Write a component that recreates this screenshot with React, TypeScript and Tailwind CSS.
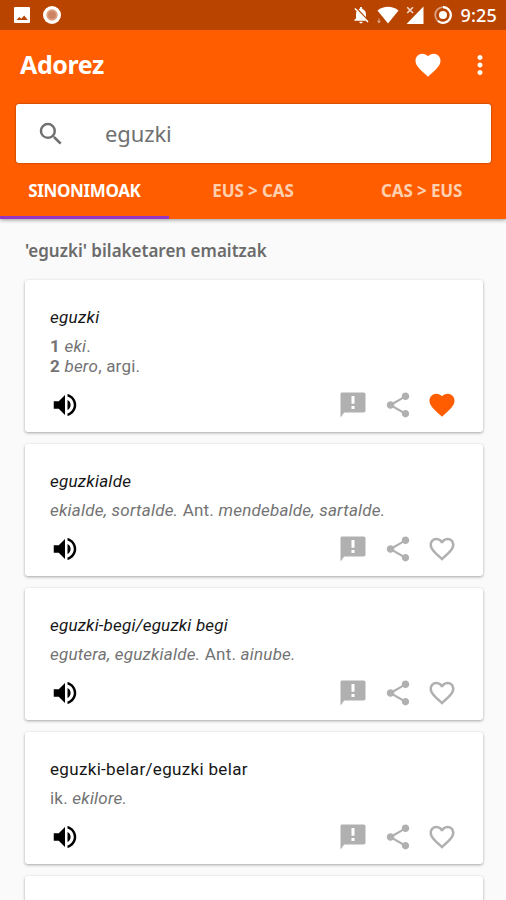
import React from 'react';
import {
  MdFavorite, MdFavoriteBorder, MdMoreVert, MdNotificationsOff,
  MdSearch, MdShare, MdVolumeUp,
} from 'react-icons/md';

const entries = [
  {
    title: <span className="tracking-[0.3px] italic">eguzki</span>,
    lines: [
      <><b className="font-bold">1</b> <i>eki</i>.</>,
      <><b className="font-bold">2</b> <i>bero</i>, argi.</>,
    ],
    favorite: true,
  },
  {
    title: <span className="tracking-[0.25px] italic">eguzkialde</span>,
    lines: [<><i>ekialde, sortalde.</i> Ant. <i>mendebalde, sartalde.</i></>],
    favorite: false,
  },
  {
    title: <span className="tracking-[0.2px] italic">eguzki-begi/eguzki begi</span>,
    lines: [<><i>egutera, eguzkialde.</i> Ant. <i>ainube.</i></>],
    favorite: false,
  },
  {
    title: <span className="tracking-[0.33px]">eguzki-belar/eguzki belar</span>,
    lines: [<>ik. <i>ekilore.</i></>],
    favorite: false,
  },
];

const FeedbackIcon: React.FC<{ className?: string }> = ({ className }) => (
  <svg className={className} viewBox="0 0 24 24" fill="currentColor">
    <path d="M20.6 2H3.2C2.4 2 2 2.5 2 3.3V22L5 18H20.6C21.4 18 22 17.4 22 16.6V3.4C22 2.6 21.4 2 20.6 2Z" />
    <path d="M10.8 4.8H13.2V11H10.8Z M10.8 12.8H13.2V15.2H10.8Z" fill="#fff" />
  </svg>
);

const StatusBar: React.FC = () => (
  <div className="flex h-[30px] items-center bg-[#b84400] pr-[9px] pl-[14px] text-white">
    <svg className="h-4 w-4" viewBox="0 0 16 16">
      <rect width="16" height="16" rx="1" fill="currentColor" />
      <path d="M2.5 13 L5.4 10 L7.3 11.7 L10.2 8.4 L13.8 13 Z" fill="#b84400" />
    </svg>
    <svg className="ml-[13px] h-[18px] w-[18px]" viewBox="0 0 18 18">
      <circle cx="9" cy="9" r="9" fill="currentColor" />
      <circle cx="9" cy="9" r="5.7" fill="#dba184" />
      <circle cx="9" cy="9" r="3.8" fill="#cd8261" />
    </svg>
    <MdNotificationsOff className="ml-auto h-5 w-5" />
    <svg className="ml-[6px] h-[18px] w-[22px]" viewBox="0 0 22 18">
      <path d="M0.5 4.6 C6.5 -0.4 15.5 -0.4 21.5 4.6 L11 17.6 Z" fill="currentColor" />
      <path d="M2 16.6 V12.6 M0.6 14.8 L2 16.6 L3.4 14.8" fill="none" stroke="#dba184" strokeWidth="1.1" />
    </svg>
    <svg className="ml-[7px] h-[18px] w-[18px]" viewBox="0 0 18 18">
      <path d="M17.5 0.5 V18 H0.5 Z" fill="currentColor" />
      <path d="M1.2 1.2 L7 7 M7 1.2 L1.2 7" stroke="#f3d9cc" strokeWidth="1.6" />
    </svg>
    <svg className="ml-[10px] h-[18px] w-[18px]" viewBox="0 0 18 18">
      <circle cx="9" cy="9" r="7.8" fill="none" stroke="#dba184" strokeWidth="1.8" />
      <path d="M9 1.2 A7.8 7.8 0 1 1 4 15" fill="none" stroke="currentColor" strokeWidth="2.2" />
      <circle cx="9" cy="9" r="4" fill="currentColor" />
    </svg>
    <span className="ml-[8px] text-[18px] leading-none font-medium tracking-[0.2px]">9:25</span>
  </div>
);

const App: React.FC = () => {
  return (
    <div className="h-[900px] w-full overflow-hidden bg-[#fafafa] font-['Noto_Sans',sans-serif]">
      <header className="relative h-[219px] bg-[#ff5d00] shadow-[0_1px_4px_rgba(0,0,0,0.4)]">
        <StatusBar />
        <div className="flex h-[74px] items-center pr-[11px] pb-[5px] pl-5 text-white">
          <h1 className="text-[25px] leading-none font-bold tracking-[-0.4px]">Adorez</h1>
          <MdFavorite className="ml-auto h-[30px] w-[30px]" />
          <MdMoreVert className="ml-[22px] h-[30px] w-[30px]" />
        </div>

        {/* Search field */}
        <div className="mr-[15px] ml-4 flex h-[59px] items-center rounded-[3px] bg-white pl-[20px] text-[#707070] shadow-[0_0_2px_rgba(0,0,0,0.5)]">
          <MdSearch className="h-[30px] w-[30px]" />
          <span className="ml-[39px] pb-[2px] text-[22px] leading-none tracking-[-0.1px]">eguzki</span>
        </div>

        {/* Tabs */}
        <nav className="grid h-[56px] grid-cols-3 text-center text-[17px] leading-[55px] font-bold text-[#ffd0b0]">
          <span className="h-[56px] border-b-[3px] border-[#9436c4] tracking-[-0.35px] text-white">SINONIMOAK</span>
          <span className="tracking-[-0.1px]">EUS &gt; CAS</span>
          <span className="tracking-[-0.1px]">CAS &gt; EUS</span>
        </nav>
      </header>

      <main className="pr-[23px] pl-[25px]">
        <h2 className="flex h-[61px] items-center pt-px text-[17px] leading-none font-semibold text-[#6b6b6b]">
          'eguzki' bilaketaren emaitzak
        </h2>

        <div className="space-y-3">
          {entries.map((entry, i) => (
            <article key={i} className="rounded-[3px] bg-white pt-[25px] pr-[26px] pb-3 pl-[25px] shadow-[0_1px_3px_rgba(0,0,0,0.35)]">
              <h3 className="h-[24px] font-[Roboto] text-[17px] leading-[24px] text-[#161616]">{entry.title}</h3>
              <div className="mt-[7px] font-[Roboto] text-[17px] leading-[20px] tracking-[0.22px] text-[#737373]">
                {entry.lines.map((line, j) => (
                  <p key={j}>{line}</p>
                ))}
              </div>
              <div className="mt-[14px] flex text-[#b0b0b0]">
                <MdVolumeUp className="h-[30px] w-[30px] text-black" />
                <FeedbackIcon className="ml-auto h-[30px] w-[30px]" />
                <MdShare className="ml-[15px] h-[30px] w-[30px]" />
                {entry.favorite ? (
                  <MdFavorite className="ml-[14px] h-[30px] w-[30px] text-[#ff5d00]" />
                ) : (
                  <MdFavoriteBorder className="ml-[14px] h-[30px] w-[30px]" />
                )}
              </div>
            </article>
          ))}
          <div className="h-[132px] rounded-[3px] bg-white shadow-[0_1px_3px_rgba(0,0,0,0.35)]" />
        </div>
      </main>
    </div>
  );
};

export default App;
